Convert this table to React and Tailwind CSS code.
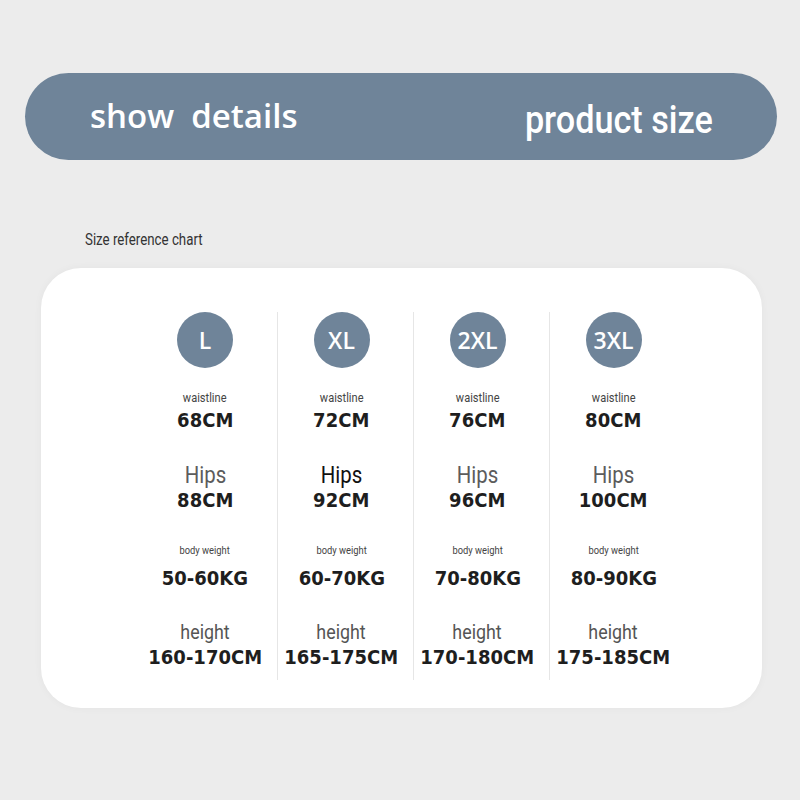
import React from 'react';

// size chart rows
const sizes = [
  { size: 'L', waist: '68CM', hips: '88CM', weight: '50-60KG', height: '160-170CM' },
  { size: 'XL', waist: '72CM', hips: '92CM', weight: '60-70KG', height: '165-175CM', darkHips: true },
  { size: '2XL', waist: '76CM', hips: '96CM', weight: '70-80KG', height: '170-180CM' },
  { size: '3XL', waist: '80CM', hips: '100CM', weight: '80-90KG', height: '175-185CM' },
];

const label = "font-['Roboto',sans-serif] scale-x-[0.85] leading-none";
const value = "font-['DejaVu_Sans',sans-serif] font-bold text-[20px] leading-[22px] text-[#1e1e1e] scale-x-90";

function SizeColumn({ item, first }) {
  return (
    <div
      className={
        'w-[136px] h-[368px] pr-[8px] flex flex-col items-center ' +
        (first ? '' : 'border-l border-[#e6e6e6]')
      }
    >
      <div className="w-[56px] h-[56px] rounded-full bg-[#6f8499] flex items-center justify-center text-white font-['Open_Sans',sans-serif] font-semibold text-[23px]">
        {item.size}
      </div>

      <span className={label + ' mt-[23px] text-[13px] text-[#444]'}>waistline</span>
      <span className={value + ' mt-[5px]'}>{item.waist}</span>

      <span
        className={
          label +
          ' mt-[32px] text-[24px] leading-[20px] scale-x-[0.82] ' +
          (item.darkHips ? 'text-[#111]' : 'text-[#5c5c5c]')
        }
      >
        Hips
      </span>
      <span className={value + ' mt-[2px] leading-[16px]'}>{item.hips}</span>

      <span className={label + ' mt-[34px] text-[11px] text-[#444]'}>body weight</span>
      <span className={value + ' mt-[11px]'}>{item.weight}</span>

      <span className={label + ' mt-[33px] text-[21px] leading-[18px] text-[#555]'}>height</span>
      <span className={value + ' mt-[3px] leading-[18px]'}>{item.height}</span>
    </div>
  );
}

export default function App() {
  return (
    <div className="w-[800px] h-[800px] bg-[#ececec] pt-[73px] overflow-hidden">
      {/* Header bar */}
      <div className="ml-[25px] w-[752px] h-[87px] rounded-full bg-[#6f8499] flex items-center justify-between pl-[65px] pr-[64px]">
        <span className="font-['Open_Sans',sans-serif] font-semibold text-[33px] text-white leading-none -mt-[2px]">
          show&nbsp; details
        </span>
        <span className="font-['Roboto',sans-serif] font-medium text-[38px] text-white leading-none scale-x-90 origin-right mt-[6px]">
          product size
        </span>
      </div>

      <div className="mt-[72px] ml-[85px] h-[16px] flex items-center">
        <span className="font-['Roboto',sans-serif] text-[16px] text-[#333] leading-none scale-x-[0.83] origin-left">
          Size reference chart
        </span>
      </div>

      {/* Chart card */}
      <div className="mt-[20px] ml-[41px] w-[721px] h-[440px] bg-white rounded-[40px] shadow-[0_0_8px_rgba(0,0,0,0.04)] pl-[100px] pt-[44px] flex">
        {sizes.map((s, i) => (
          <SizeColumn key={s.size} item={s} first={i === 0} />
        ))}
      </div>
    </div>
  );
}
